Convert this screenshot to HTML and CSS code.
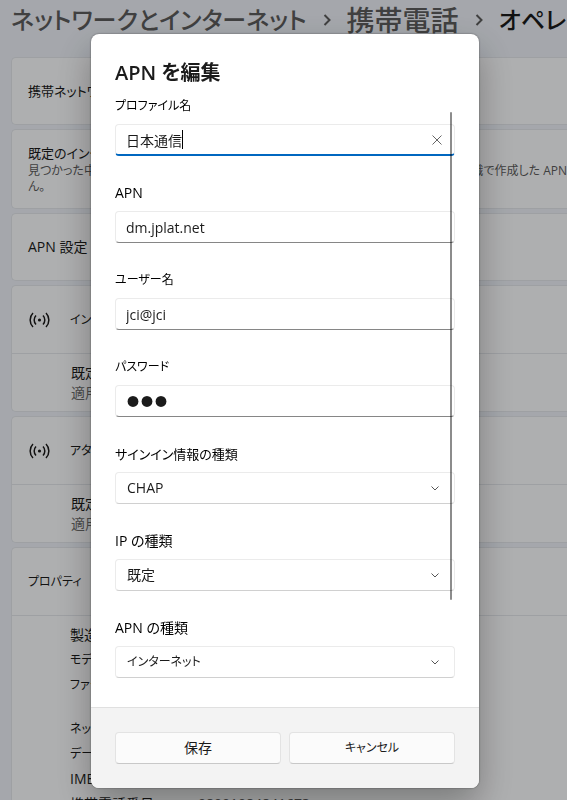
FILE: index.html
```html
<!DOCTYPE html>
<html lang="ja">
<head>
    <meta charset="UTF-8">
    <meta name="viewport" content="width=device-width, initial-scale=1.0">
    <title>APN を編集</title>
    <link rel="stylesheet" href="styles.css">
</head>
<body>
    <main class="page">
        <nav class="breadcrumb">
            <a href="#" class="crumb-kana">ネットワークとインターネット</a>
            <svg class="separator" viewBox="0 0 8 12"><path d="M1.5 1l5 5-5 5"/></svg>
            <a href="#">携帯電話</a>
            <svg class="separator" viewBox="0 0 8 12"><path d="M1.5 1l5 5-5 5"/></svg>
            <span class="crumb-kana">オペレー</span>
        </nav>
        <section class="card card-row mixed">携帯ネットワ</section>
        <section class="card card-row card-tall">
            <div class="mixed">既定のインタ</div>
            <div class="note"><span>見つかった中か</span><span>織で作成した APN</span></div>
            <div class="note">ん。</div>
        </section>
        <section class="card card-row">APN 設定</section>
        <section class="card">
            <div class="group-head">
                <svg class="signal" viewBox="0 0 22 16"><circle cx="11" cy="8" r="1.6"/><path d="M7.5 3.5a6.5 6.5 0 0 0 0 9M14.5 3.5a6.5 6.5 0 0 1 0 9M4.5 1a10 10 0 0 0 0 14M17.5 1a10 10 0 0 1 0 14"/></svg>
                <span class="kana">イン</span>
            </div>
            <div class="group-body">
                <div>既定</div>
                <div class="status">適用</div>
            </div>
        </section>
        <section class="card">
            <div class="group-head">
                <svg class="signal" viewBox="0 0 22 16"><circle cx="11" cy="8" r="1.6"/><path d="M7.5 3.5a6.5 6.5 0 0 0 0 9M14.5 3.5a6.5 6.5 0 0 1 0 9M4.5 1a10 10 0 0 0 0 14M17.5 1a10 10 0 0 1 0 14"/></svg>
                <span class="kana">アタ</span>
            </div>
            <div class="group-body">
                <div>既定</div>
                <div class="status">適用</div>
            </div>
        </section>
        <section class="card">
            <div class="group-head kana">プロパティ</div>
            <dl class="properties">
                <dt>製造</dt><dd></dd>
                <dt class="kana">モデ</dt><dd></dd>
                <dt class="kana">ファー</dt><dd></dd>
                <dt class="kana block-start">ネッ</dt><dd class="block-start"></dd>
                <dt class="kana">デー</dt><dd></dd>
                <dt>IMEI</dt><dd></dd>
                <dt>携帯電話番号</dt><dd>08091084841673</dd>
            </dl>
        </section>
    </main>

    <div class="overlay">
        <form class="dialog" role="dialog" aria-labelledby="dialog-title">
            <div class="dialog-body">
                <h1 id="dialog-title">APN を編集</h1>
                <div class="field">
                    <label class="kana" for="profile">プロファイル名</label>
                    <div class="control">
                        <input class="focused" id="profile" type="text" value="日本通信">
                        <span class="caret"></span>
                        <button class="clear" type="button" aria-label="クリア"><svg viewBox="0 0 10 10"><path d="M.5.5l9 9M9.5.5l-9 9"/></svg></button>
                    </div>
                </div>
                <div class="field">
                    <label for="apn">APN</label>
                    <input id="apn" type="text" value="dm.jplat.net">
                </div>
                <div class="field">
                    <label class="kana" for="user">ユーザー名</label>
                    <input id="user" type="text" value="jci@jci">
                </div>
                <div class="field">
                    <label class="kana" for="password">パスワード</label>
                    <input id="password" type="password" value="jci">
                </div>
                <div class="field">
                    <label class="mixed" for="auth">サインイン情報の種類</label>
                    <div class="control">
                        <select id="auth"><option>CHAP</option></select>
                        <svg class="chevron" viewBox="0 0 8 5"><path d="M.5.5L4 4 7.5.5"/></svg>
                    </div>
                </div>
                <div class="field">
                    <label for="ip">IP の種類</label>
                    <div class="control">
                        <select id="ip"><option>既定</option></select>
                        <svg class="chevron" viewBox="0 0 8 5"><path d="M.5.5L4 4 7.5.5"/></svg>
                    </div>
                </div>
                <div class="field">
                    <label for="apn-type">APN の種類</label>
                    <div class="control">
                        <select class="kana" id="apn-type"><option>インターネット</option></select>
                        <svg class="chevron" viewBox="0 0 8 5"><path d="M.5.5L4 4 7.5.5"/></svg>
                    </div>
                </div>
                <div class="scrollbar"></div>
            </div>
            <div class="dialog-footer">
                <button type="button">保存</button>
                <button class="kana" type="button">キャンセル</button>
            </div>
        </form>
    </div>
</body>
</html>
```
FILE: styles.css
```css
* {
    box-sizing: border-box;
}
body {
    margin: 0;
    height: 100vh;
    overflow: hidden;
    background: #ecf0f7;
    color: #1b1b1b;
    font-family: "Open Sans", "Noto Sans CJK JP", sans-serif;
    font-size: 14px;
    line-height: 20px;
    font-feature-settings: "palt";
}
input, select, button {
    font: inherit;
    font-feature-settings: inherit;
    color: inherit;
}
svg {
    fill: none;
    stroke: currentColor;
}
.kana {
    font-size: 12px;
}
.mixed {
    font-size: 13px;
}

/* settings page */
.page {
    display: flex;
    flex-direction: column;
    gap: 4px;
    height: 100vh;
    overflow: hidden;
    padding-left: 11px;
    white-space: nowrap;
}
.breadcrumb {
    display: flex;
    flex: none;
    align-items: center;
    gap: 16px;
    height: 40px;
    margin-bottom: 13px;
    font-size: 28px;
    line-height: 40px;
    font-weight: 500;
}
.breadcrumb a {
    color: #5c5c5c;
    text-decoration: none;
}
.breadcrumb .crumb-kana {
    font-size: 24px;
}
.separator {
    flex: none;
    width: 8px;
    height: 12px;
    color: #5c5c5c;
    stroke-width: 2;
}
.card {
    flex: none;
    background: #fafbfc;
    border: 1px solid #e2e5ea;
    border-right: 0;
    border-radius: 5px 0 0 5px;
}
.card-row {
    display: flex;
    flex-direction: column;
    justify-content: center;
    height: 68px;
    padding-left: 16px;
}
.card-tall {
    height: 80px;
}
.note {
    display: flex;
    justify-content: space-between;
    font-size: 12px;
    line-height: 16px;
    color: #5c5c5c;
}
.group-head {
    display: flex;
    align-items: center;
    gap: 19px;
    height: 67px;
    padding-left: 16px;
}
.signal {
    width: 23px;
    height: 16px;
    stroke-width: 1.5;
}
.signal circle {
    fill: currentColor;
    stroke: none;
}
.group-body {
    height: 58px;
    padding: 9px 0 0 59px;
    border-top: 1px solid #e2e5ea;
}
.status {
    color: #6c6c6c;
}
.properties {
    display: grid;
    grid-template-columns: 128px 1fr;
    margin: 0;
    padding: 6px 0 0 58px;
    border-top: 1px solid #e2e5ea;
    line-height: 25px;
}
.properties dd {
    margin: 0;
    color: #5c5c5c;
}
.properties .block-start {
    padding-top: 19px;
}

/* dialog */
.overlay {
    position: fixed;
    inset: 0;
    display: flex;
    align-items: flex-start;
    padding: 34px 88px 12px 91px;
    background: rgba(0, 0, 0, .3);
}
.dialog {
    flex: 1;
    overflow: hidden;
    background: #fff;
    border-radius: 8px;
    box-shadow: 0 0 2px rgba(0, 0, 0, .5), 0 16px 36px rgba(0, 0, 0, .3);
}
.dialog-body {
    position: relative;
    display: flex;
    flex-direction: column;
    gap: 27px;
    padding: 25px 24px 29px;
}
h1 {
    margin: 0 0 -18px;
    font-size: 20px;
    line-height: 28px;
    font-weight: 600;
}
.field {
    display: flex;
    flex-direction: column;
    gap: 8px;
}
.field label {
    color: #000;
}
.control {
    position: relative;
}
.field input,
.field select {
    display: block;
    width: 100%;
    height: 32px;
    padding: 0 10px;
    background: #fff;
    border: 1px solid #ebebeb;
    border-bottom-color: #868686;
    border-radius: 4px;
    outline: none;
    appearance: none;
}
.field select {
    padding-left: 11px;
    border-bottom-color: #d0d0d0;
}
.field .focused {
    border-bottom: 2px solid #0067c0;
}
.field input[type="password"] {
    font-family: "Liberation Sans", Arial, sans-serif;
    font-size: 40px;
}
.caret {
    position: absolute;
    top: 6px;
    left: 67px;
    width: 1px;
    height: 19px;
    background: #000;
}
.clear {
    position: absolute;
    top: 6px;
    right: 8px;
    display: grid;
    place-items: center;
    width: 20px;
    height: 20px;
    padding: 0;
    background: none;
    border: 0;
    color: #666;
}
.clear svg {
    width: 10px;
    height: 10px;
}
.chevron {
    position: absolute;
    top: 14px;
    right: 16px;
    width: 8px;
    height: 5px;
    color: #555;
    pointer-events: none;
}
.scrollbar {
    position: absolute;
    top: 78px;
    right: 27px;
    bottom: 107px;
    width: 2px;
    border-radius: 1px;
    background: rgba(0, 0, 0, .45);
}
.dialog-footer {
    display: flex;
    gap: 8px;
    padding: 24px;
    background: #f3f3f3;
    border-top: 1px solid #e0e0e0;
}
.dialog-footer button {
    flex: 1;
    height: 32px;
    padding: 0;
    background: #fbfbfb;
    border: 1px solid #e3e3e3;
    border-bottom-color: #c8c8c8;
    border-radius: 4px;
}
```
